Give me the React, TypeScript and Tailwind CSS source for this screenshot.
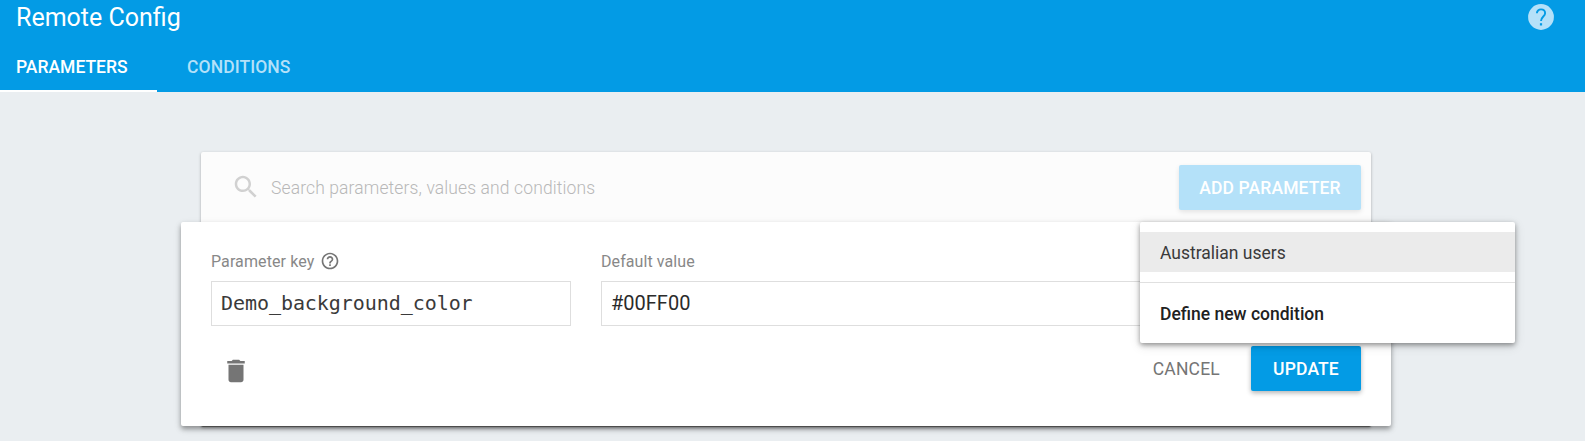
import React from "react";

function HelpFilled() {
  return (
    <svg viewBox="0 0 26 26" className="block size-[26px]">
      <circle cx="13" cy="13" r="12.9" fill="#b4e1f9" />
      <path
        d="M8.9 9.3C8.9 6.9 10.7 5.4 13 5.4s4.1 1.4 4.1 3.8c0 3.2-4.1 3.6-4.1 7.9"
        fill="none"
        stroke="#039be5"
        strokeWidth="1.9"
      />
      <rect x="11.9" y="19.2" width="2.2" height="2.3" fill="#039be5" />
    </svg>
  );
}

function HelpOutline() {
  return (
    <svg viewBox="0 0 24 24" className="block size-5 fill-[#757575]">
      <path d="M11 18h2v-2h-2v2zm1-16C6.48 2 2 6.48 2 12s4.48 10 10 10 10-4.48 10-10S17.52 2 12 2zm0 18c-4.41 0-8-3.59-8-8s3.59-8 8-8 8 3.59 8 8-3.59 8-8 8zm0-14c-2.21 0-4 1.79-4 4h2c0-1.1.9-2 2-2s2 .9 2 2c0 2-3 1.75-3 5h2c0-2.25 3-2.5 3-5 0-2.21-1.79-4-4-4z" />
    </svg>
  );
}

function SearchIcon() {
  return (
    <svg viewBox="0 0 24 24" className="block size-[30px] fill-[#d1d1d1]">
      <path d="M15.5 14h-.79l-.28-.27C15.41 12.59 16 11.11 16 9.5 16 5.91 13.09 3 9.5 3S3 5.91 3 9.5 5.91 16 9.5 16c1.61 0 3.09-.59 4.23-1.57l.27.28v.79l5 4.99L20.49 19l-4.99-5zm-6 0C7.01 14 5 11.99 5 9.5S7.01 5 9.5 5 14 7.01 14 9.5 11.99 14 9.5 14z" />
    </svg>
  );
}

function TrashIcon() {
  return (
    <svg viewBox="0 0 24 24" className="block size-[30px] fill-[#757575]">
      <path d="M6 19c0 1.1.9 2 2 2h8c1.1 0 2-.9 2-2V7H6v12zM19 4h-3.5l-1-1h-5l-1 1H5v2h14V4z" />
    </svg>
  );
}

function Header() {
  return (
    <header className="flex h-[92px] flex-col justify-between bg-[#039be5] text-white">
      <div className="flex items-start justify-between pl-4 pr-[31px]">
        <h1 className="pt-px text-[25px] leading-[34px]">Remote Config</h1>
        <div className="pt-[4px]">
          <HelpFilled />
        </div>
      </div>
      <nav className="flex h-[50px] text-[17.5px] font-medium leading-[50px]">
        <a className="w-[157px] border-b-2 border-white pl-4">PARAMETERS</a>
        <a className="pl-[30px] tracking-[0.08px] text-[#b4e1f9]">CONDITIONS</a>
      </nav>
    </header>
  );
}

function ConditionMenu() {
  return (
    <div className="absolute left-[959px] top-0 h-[121px] w-[375px] rounded-[2px] bg-white pt-[10px] text-[17.5px] text-[#212121] shadow-[0_2px_5px_rgba(0,0,0,0.38),0_3px_12px_rgba(0,0,0,0.12)]">
      <div className="h-10 bg-[#ebebeb] pl-5 leading-[42px] text-[#3a3a3a]">Australian users</div>
      <div className="mt-[10px] h-px bg-[#e0e0e0]" />
      <div className="mt-[11px] pl-5 font-medium leading-10">Define new condition</div>
    </div>
  );
}

function ParameterEditor() {
  return (
    <section className="relative -mx-5 h-[204px] rounded-[2px] bg-white px-[30px] pt-[28px] shadow-[0_3px_5px_rgba(0,0,0,0.36),0_3px_10px_rgba(0,0,0,0.08)]">
      <div className="flex gap-[30px]">
        <div className="w-[360px]">
          <div className="flex h-[22px] items-center gap-[6px] text-base text-[#888888]">
            <span className="pt-[2px] tracking-[0.1px]">Parameter key</span>
            <HelpOutline />
          </div>
          <div className="mt-[9px] h-[45px] border border-[#dedede] pl-[9px] font-['DejaVu_Sans_Mono',monospace] text-[20px] leading-[43px] tracking-[-0.06px] text-[#3a3a3a]">
            Demo_background_color
          </div>
        </div>
        <div className="flex-1">
          <div className="flex h-[22px] items-center pt-[2px] text-base tracking-[0.08px] text-[#888888]">
            Default value
          </div>
          <div className="mt-[9px] h-[45px] border border-[#dedede] pl-[9px] text-[20px] leading-[43px] text-[#2b2b2b]">
            #00FF00
          </div>
        </div>
      </div>
      <div className="mt-[20px] flex h-[45px] items-center justify-between">
        <div className="pl-[10px] pt-[5px]">
          <TrashIcon />
        </div>
        <div className="flex text-[17.5px] leading-[46px]">
          <span className="pr-[31px] tracking-[0.2px] text-[#757575]">CANCEL</span>
          <span className="h-[45px] w-[110px] rounded-[2px] bg-[#039be5] text-center font-medium tracking-[0.15px] text-white shadow-[0_2px_5px_rgba(0,0,0,0.3)]">
            UPDATE
          </span>
        </div>
      </div>
      <ConditionMenu />
    </section>
  );
}

export default function App() {
  return (
    <div className="h-[441px] overflow-hidden bg-[#eaeef1] font-['Roboto',sans-serif]">
      <Header />
      <main className="ml-[201px] mt-[60px] h-[275px] w-[1170px] rounded-[2px] border-b border-[#757575] bg-[#fcfcfc] shadow-[0_1px_3px_rgba(0,0,0,0.3)]">
        <div className="flex h-[70px] items-center justify-between pl-[30px] pr-[10px]">
          <div className="flex items-center gap-[10px] text-[17.5px] font-light text-[#b8b8b8]">
            <SearchIcon />
            <span className="pt-[2px] tracking-[0.12px]">Search parameters, values and conditions</span>
          </div>
          <div className="h-[45px] w-[182px] rounded-[2px] bg-[#b4e1f9] text-center text-[17.5px] font-medium leading-[46px] tracking-[0.12px] text-white shadow-[0_2px_5px_rgba(0,0,0,0.1)]">
            ADD PARAMETER
          </div>
        </div>
        <ParameterEditor />
      </main>
    </div>
  );
}
